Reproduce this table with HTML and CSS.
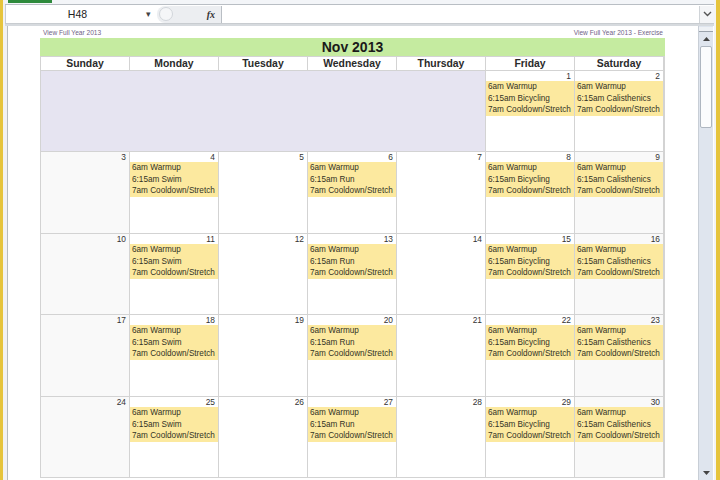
FILE: index.html
```html
<!DOCTYPE html>
<html>
<head>
<meta charset="utf-8">
<link rel="stylesheet" href="styles.css">
</head>
<body>
<div class="app">
  <div class="edge-left"></div>
  <div class="main">
    <div class="ribbon"><div class="tab"></div></div>
    <div class="formula">
      <div class="namebox"><span class="name">H48</span><span class="drop">▾</span></div>
      <div class="fxbox"><span class="circle"></span><span class="fx">fx</span></div>
      <div class="input"></div>
      <div class="chev"><svg width="9" height="6" viewBox="0 0 9 6"><path d="M1 1 L4.5 4.5 L8 1" fill="none" stroke="#555" stroke-width="1.4"/></svg></div>
    </div>
    <div class="sheetwrap">
      <div class="gutter"></div>
      <div class="sheet">
        <div class="cal">
          <div class="links"><span>View Full Year 2013</span><span>View Full Year 2013 - Exercise</span></div>
          <div class="title">Nov 2013</div>
          <div class="grid">
            <div class="hd">Sunday</div><div class="hd">Monday</div><div class="hd">Tuesday</div><div class="hd">Wednesday</div><div class="hd">Thursday</div><div class="hd">Friday</div><div class="hd">Saturday</div>

            <div class="blank"></div>
            <div class="day"><div class="num">1</div><div class="ev">6am Warmup<br>6:15am Bicycling<br>7am Cooldown/Stretch</div></div>
            <div class="day"><div class="num">2</div><div class="ev">6am Warmup<br>6:15am Calisthenics<br>7am Cooldown/Stretch</div></div>

            <div class="day we"><div class="num">3</div></div>
            <div class="day"><div class="num">4</div><div class="ev">6am Warmup<br>6:15am Swim<br>7am Cooldown/Stretch</div></div>
            <div class="day"><div class="num">5</div></div>
            <div class="day"><div class="num">6</div><div class="ev">6am Warmup<br>6:15am Run<br>7am Cooldown/Stretch</div></div>
            <div class="day"><div class="num">7</div></div>
            <div class="day"><div class="num">8</div><div class="ev">6am Warmup<br>6:15am Bicycling<br>7am Cooldown/Stretch</div></div>
            <div class="day we"><div class="num">9</div><div class="ev">6am Warmup<br>6:15am Calisthenics<br>7am Cooldown/Stretch</div></div>

            <div class="day we"><div class="num">10</div></div>
            <div class="day"><div class="num">11</div><div class="ev">6am Warmup<br>6:15am Swim<br>7am Cooldown/Stretch</div></div>
            <div class="day"><div class="num">12</div></div>
            <div class="day"><div class="num">13</div><div class="ev">6am Warmup<br>6:15am Run<br>7am Cooldown/Stretch</div></div>
            <div class="day"><div class="num">14</div></div>
            <div class="day"><div class="num">15</div><div class="ev">6am Warmup<br>6:15am Bicycling<br>7am Cooldown/Stretch</div></div>
            <div class="day we"><div class="num">16</div><div class="ev">6am Warmup<br>6:15am Calisthenics<br>7am Cooldown/Stretch</div></div>

            <div class="day we"><div class="num">17</div></div>
            <div class="day"><div class="num">18</div><div class="ev">6am Warmup<br>6:15am Swim<br>7am Cooldown/Stretch</div></div>
            <div class="day"><div class="num">19</div></div>
            <div class="day"><div class="num">20</div><div class="ev">6am Warmup<br>6:15am Run<br>7am Cooldown/Stretch</div></div>
            <div class="day"><div class="num">21</div></div>
            <div class="day"><div class="num">22</div><div class="ev">6am Warmup<br>6:15am Bicycling<br>7am Cooldown/Stretch</div></div>
            <div class="day we"><div class="num">23</div><div class="ev">6am Warmup<br>6:15am Calisthenics<br>7am Cooldown/Stretch</div></div>

            <div class="day we"><div class="num">24</div></div>
            <div class="day"><div class="num">25</div><div class="ev">6am Warmup<br>6:15am Swim<br>7am Cooldown/Stretch</div></div>
            <div class="day"><div class="num">26</div></div>
            <div class="day"><div class="num">27</div><div class="ev">6am Warmup<br>6:15am Run<br>7am Cooldown/Stretch</div></div>
            <div class="day"><div class="num">28</div></div>
            <div class="day"><div class="num">29</div><div class="ev">6am Warmup<br>6:15am Bicycling<br>7am Cooldown/Stretch</div></div>
            <div class="day we"><div class="num">30</div><div class="ev">6am Warmup<br>6:15am Calisthenics<br>7am Cooldown/Stretch</div></div>
          </div>
        </div>
      </div>
      <div class="vscroll">
        <div class="split"></div>
        <div class="arrow up"><svg width="7" height="4" viewBox="0 0 7 4"><path d="M0 4 L3.5 0 L7 4 Z" fill="#444"/></svg></div>
        <div class="track"><div class="thumb"></div></div>
        <div class="arrow dn"><svg width="7" height="4" viewBox="0 0 7 4"><path d="M0 0 L3.5 4 L7 0 Z" fill="#444"/></svg></div>
      </div>
    </div>
  </div>
  <div class="edge-right"></div>
</div>
</body>
</html>
```
FILE: styles.css
```css
html, body { margin: 0; padding: 0; }
body { width: 720px; height: 480px; overflow: hidden; font-family: "Liberation Sans", Arial, sans-serif; color: #333; background: #fff; }
.app { display: flex; height: 480px; }
.edge-left { width: 3px; background: #e6c43c; border-right: 2px solid #f2f2f2; }
.edge-right { width: 4px; background: #e6c43c; border-left: 2px solid #f4f4f4; }
.main { flex: 1; display: flex; flex-direction: column; min-width: 0; }
.ribbon { height: 4px; background: #f3f5f8; border-bottom: 1px solid #b9bec4; position: relative; }
.tab { position: absolute; left: 3px; top: 0; width: 44px; height: 3px; background: #2e8a3c; }
.formula { height: 18px; display: flex; align-items: center; background: #fff; border-bottom: 1px solid #c8ccd0; }
.namebox { width: 150px; display: flex; align-items: center; height: 18px; border-left: 1px solid #c9cdd2; }
.name { flex: 1; text-align: center; font-size: 10.5px; color: #222; padding-left: 3px; }
.drop { font-size: 9px; color: #444; width: 10px; }
.fxbox { width: 64px; height: 17px; display: flex; align-items: center; justify-content: space-between; background: #eceef1; border-radius: 8px 0 0 8px; margin-left: 1px; }
.circle { width: 12px; height: 12px; border-radius: 50%; border: 1px solid #d2d6db; margin-left: 2px; background: #f5f6f8; }
.fx { font-family: "Liberation Serif", serif; font-style: italic; font-weight: bold; font-size: 10px; color: #333; margin-right: 6px; }
.input { flex: 1; height: 17px; border-left: 1px solid #b9bec4; background: #fff; }
.chev { width: 14px; height: 17px; display: flex; align-items: center; justify-content: center; border-left: 1px solid #d0d4d8; background: #f4f5f7; }
.sheetwrap { flex: 1; display: flex; border-top: 2px solid #d6dade; }
.gutter { width: 2px; border-right: 1px solid #b8bcc0; background: #f2f2f2; }
.sheet { flex: 1; background: #fff; }
.cal { width: 625px; margin-left: 32px; }
.links { display: flex; justify-content: space-between; height: 12px; align-items: center; font-size: 6.6px; color: #6f5f86; padding: 0 2px 0 3px; }
.title { height: 18px; line-height: 19px; background: #c5eba0; text-align: center; font-weight: bold; font-size: 14px; color: #1a1a1a; }
.grid { display: grid; grid-template-columns: repeat(7, 88px); grid-template-rows: 13px 80px 81px 80px 81px 80px; gap: 1px; background: #d3d3d3; border: 1px solid #d3d3d3; }
.hd { background: #fff; font-weight: bold; font-size: 10.4px; text-align: center; line-height: 13px; color: #2a2a2a; }
.blank { grid-column: span 5; background: #e6e4f1; }
.day { background: #fff; }
.day.we { background: #f9f9f9; }
.num { text-align: right; font-size: 8.4px; line-height: 10px; padding-right: 3px; color: #333; }
.ev { background: #fce99f; font-size: 8.2px; line-height: 11.6px; padding-left: 2px; color: #333326; white-space: nowrap; }
.vscroll { width: 14px; display: flex; flex-direction: column; background: #dfe5ee; border-left: 1px solid #c8ced6; margin-right: 1px; }
.split { height: 4px; border-bottom: 1px solid #9aa2ac; background: #eef1f5; margin-top: 1px; }
.arrow { height: 14px; display: flex; align-items: center; justify-content: center; }
.track { flex: 1; }
.thumb { margin: 0 1px; height: 80px; background: #fbfcfd; border: 1px solid #aeb6c0; border-radius: 2px; }
```
